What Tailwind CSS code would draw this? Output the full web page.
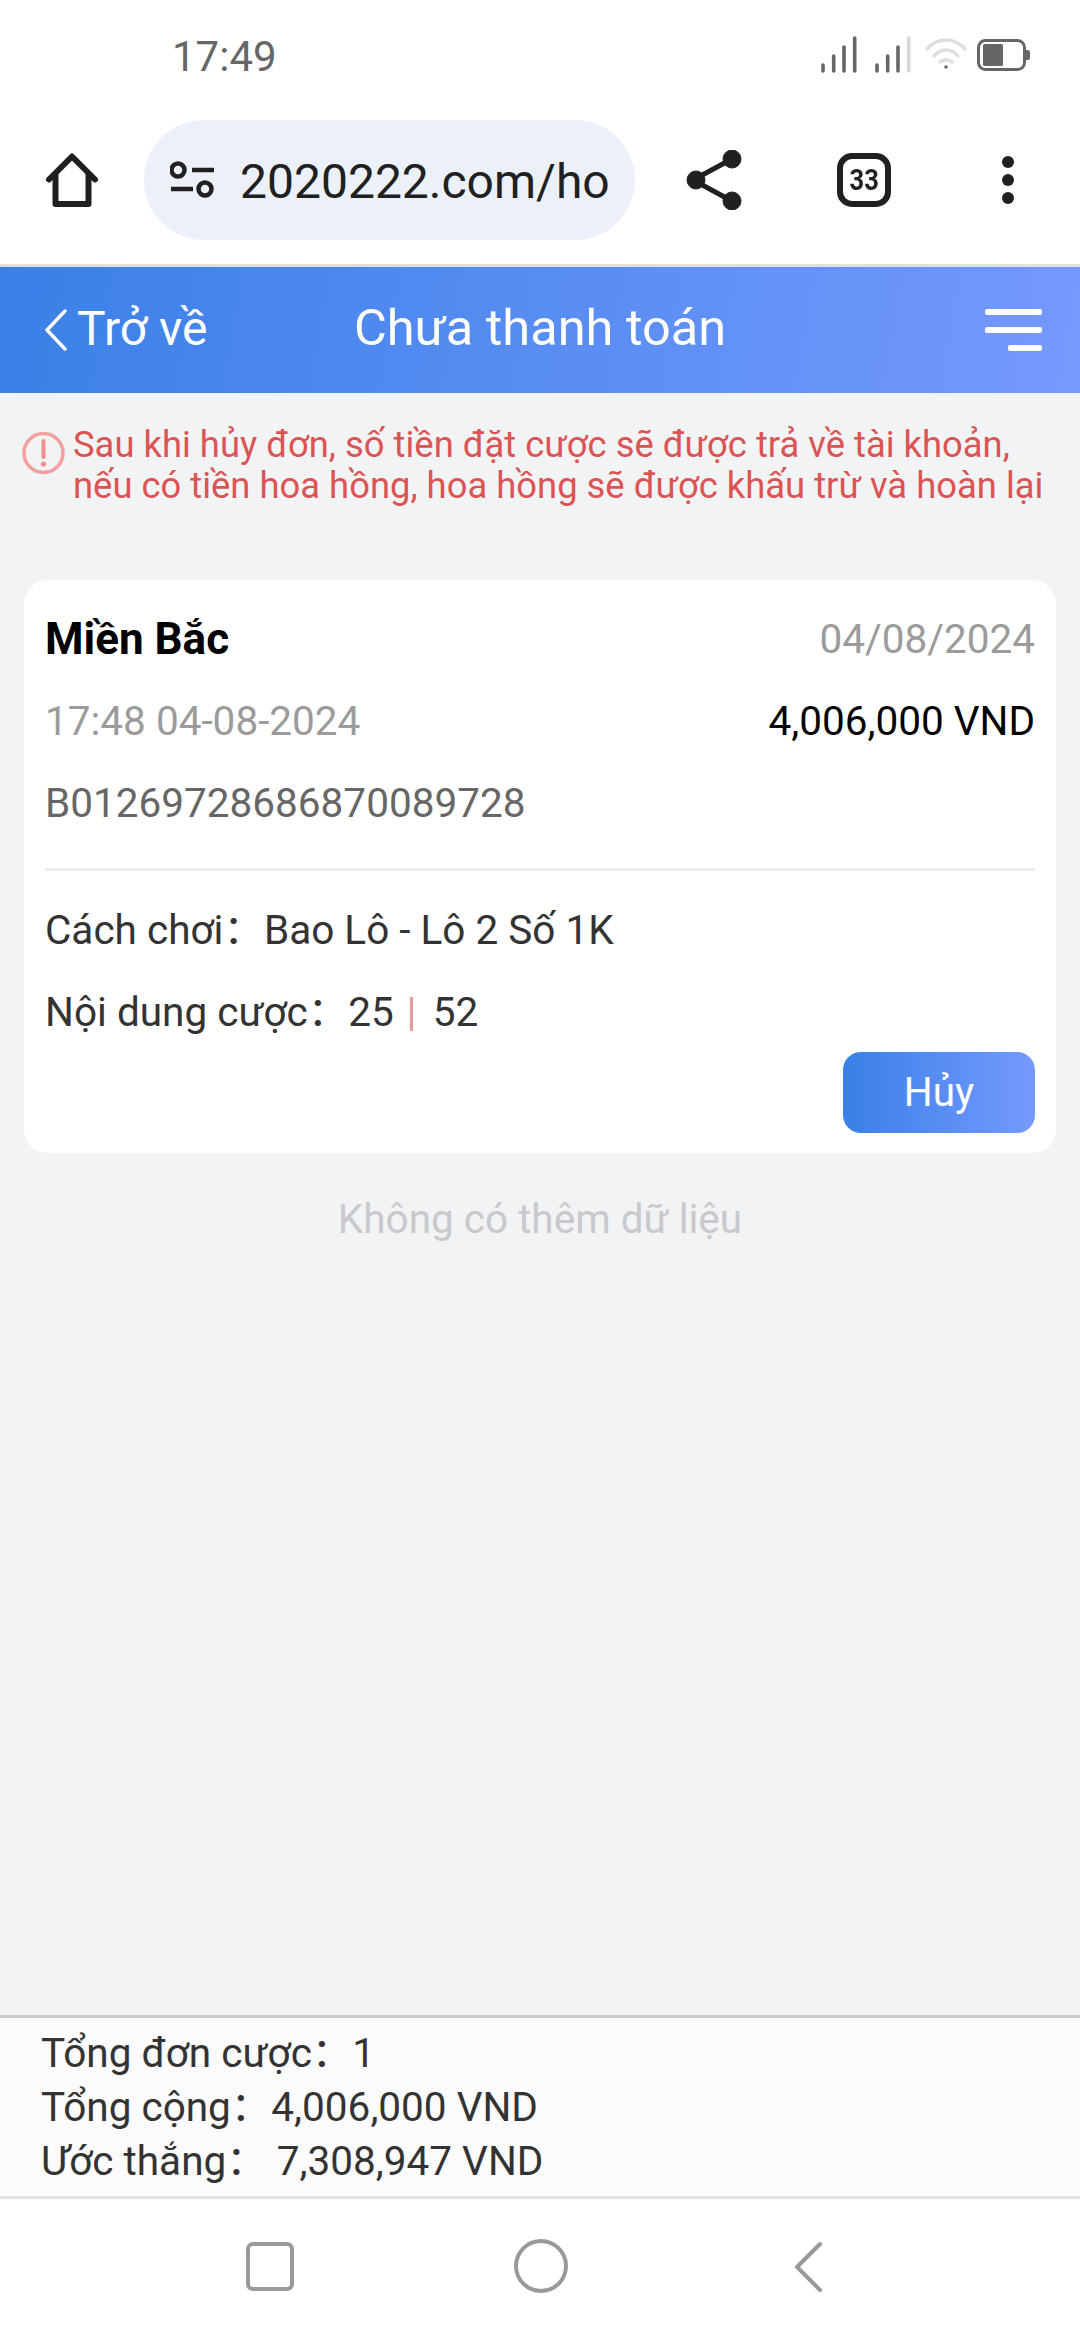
<!DOCTYPE html>
<html lang="vi">
<head>
<meta charset="utf-8">
<script src="https://cdn.jsdelivr.net/npm/@tailwindcss/browser@4"></script>
</head>
<body class="m-0">
<div class="w-[1080px] h-[2340px] flex flex-col bg-[#f2f3f5] overflow-hidden font-[Roboto,'Noto_Sans_CJK_SC',sans-serif]">
  <!-- status bar -->
  <div class="h-[100px] shrink-0 bg-white flex items-center pl-[172px] pr-[45px] pt-[14px]">
    <span class="text-[42px] leading-none text-[#666666]">17:49</span>
    <svg class="ml-auto -mt-[4px]" width="215" height="44" viewBox="820 33 215 44" fill="none">
      <g stroke="#666666" stroke-width="3.6" stroke-linecap="round">
        <path d="M823 71V65M833.7 71V56M844 71V47M854.7 71V38M877 71V65M887.7 71V56M898 71V47"/>
        <path d="M908.7 71V38" stroke="#d6d6d6"/>
      </g>
      <g stroke="#dedede" stroke-width="3.4" stroke-linecap="round">
        <path d="M927 49C938 37 954 37 965 49"/>
        <path d="M934 56C941 48 951 48 958 56" />
        <path d="M940 62C943 59 949 59 952 62" />
      </g>
      <circle cx="946" cy="67" r="1.8" fill="#666666"/>
      <rect x="978.5" y="40.5" width="46" height="29" rx="7" stroke="#666666" stroke-width="3"/>
      <rect x="983" y="44" width="20" height="22" rx="1.5" fill="#666666"/>
      <path d="M1026 50h1.5a2.5 2.5 0 0 1 2.5 2.5v5a2.5 2.5 0 0 1-2.5 2.5H1026z" fill="#666666"/>
    </svg>
  </div>
  <!-- browser toolbar -->
  <div class="h-[167px] shrink-0 bg-white border-b-[3px] border-[#e0e0e0] flex items-start pt-[20px]">
    <div class="w-[144px] h-[120px] flex items-center justify-center">
      <svg width="60" height="60" viewBox="0 0 60 60" fill="none" stroke="#202020" stroke-width="6" stroke-linecap="round" stroke-linejoin="round">
        <path d="M7 29.5 30 6.5 53 29.5"/>
        <path d="M13.5 24V54H46.5V24"/>
      </svg>
    </div>
    <div class="w-[491px] h-[120px] rounded-[60px] bg-[#ecf0f9] flex items-center pl-[26px] overflow-hidden">
      <svg class="shrink-0" width="48" height="40" viewBox="0 0 48 40" fill="none" stroke="#202020" stroke-width="4.5">
        <circle cx="8" cy="10" r="6.5"/>
        <path d="M22 10H44"/>
        <path d="M1 29H23"/>
        <circle cx="35" cy="29" r="6.5"/>
      </svg>
      <span class="ml-[22px] mt-[3px] text-[48px] leading-none text-[#202020] whitespace-nowrap">2020222.com/ho</span>
    </div>
    <div class="w-[158px] h-[120px] flex items-center justify-center">
      <svg width="60" height="60" viewBox="0 0 60 60" fill="#202020" stroke="#202020">
        <path d="M46 10 9 30 46 50" fill="none" stroke-width="5"/>
        <circle cx="48" cy="9" r="9"/>
        <circle cx="12" cy="30" r="9"/>
        <circle cx="48" cy="51" r="9"/>
      </svg>
    </div>
    <div class="w-[142px] h-[120px] flex items-center justify-center">
      <div class="w-[54px] h-[54px] rounded-[15px] border-[6px] border-[#202020] flex items-center justify-center text-[30px] font-bold leading-none text-[#202020]"><span class="scale-x-[0.85]">33</span></div>
    </div>
    <div class="w-[145px] h-[120px] flex flex-col items-center justify-center gap-[6px]">
      <div class="w-[12px] h-[12px] rounded-full bg-[#202020]"></div>
      <div class="w-[12px] h-[12px] rounded-full bg-[#202020]"></div>
      <div class="w-[12px] h-[12px] rounded-full bg-[#202020]"></div>
    </div>
  </div>
  <!-- page header -->
  <div class="relative h-[126px] shrink-0 bg-[linear-gradient(100deg,#3a80e6,#7599ff)] flex items-center pl-[44px] pr-[38px] text-white">
    <svg class="shrink-0" width="24" height="42" viewBox="0 0 24 42" fill="none" stroke="white" stroke-width="3.4" stroke-linecap="round" stroke-linejoin="round">
      <path d="M21 2 3 21 21 40"/>
    </svg>
    <span class="ml-[9px] text-[48px] leading-none -mt-[2px]">Trở về</span>
    <span class="absolute left-[340px] w-[400px] text-center text-[50.5px] leading-none whitespace-nowrap -mt-[3px]">Chưa thanh toán</span>
    <div class="ml-auto flex flex-col items-end gap-[12px]">
      <div class="w-[57px] h-[6px] rounded-[2px] bg-white"></div>
      <div class="w-[57px] h-[6px] rounded-[2px] bg-white"></div>
      <div class="w-[34px] h-[6px] rounded-[2px] bg-white"></div>
    </div>
  </div>
  <!-- content -->
  <div class="flex-1 flex flex-col">
    <div class="flex items-start pt-[31px] pl-[22px]">
      <svg class="shrink-0 mt-[7px] blur-[0.6px]" width="44" height="44" viewBox="0 0 44 44" fill="none">
        <circle cx="21.5" cy="22" r="19.5" stroke="#f2a0a0" stroke-width="3.5"/>
        <path d="M21.5 10V26" stroke="#ee9090" stroke-width="4" stroke-linecap="round"/>
        <circle cx="21.5" cy="33" r="2.6" fill="#ee9090"/>
      </svg>
      <p class="ml-[7px] text-[36.4px] leading-[41px] text-[#dc5353] whitespace-nowrap">Sau khi hủy đơn, số tiền đặt cược sẽ được trả về tài khoản,<br>nếu có tiền hoa hồng, hoa hồng sẽ được khấu trừ và hoàn lại</p>
    </div>
    <div class="mt-[74px] mx-[24px] bg-white rounded-[24px] pt-[18px] pb-[20px] px-[21px]">
      <div class="h-[82px] flex items-center justify-between">
        <span class="text-[44px] leading-none font-bold text-black">Miền Bắc</span>
        <span class="text-[40.5px] leading-none text-[#9b9b9b]">04/08/2024</span>
      </div>
      <div class="h-[82px] flex items-center justify-between">
        <span class="text-[40.5px] leading-none text-[#9b9b9b]">17:48 04-08-2024</span>
        <span class="text-[40.5px] leading-none text-black">4,006,000 VND</span>
      </div>
      <div class="h-[82px] flex items-center">
        <span class="text-[40.5px] leading-none text-[#666666]">B01269728686870089728</span>
      </div>
      <div class="mt-[24px] mb-[18px] h-[3px] bg-[#eeeeee]"></div>
      <div class="h-[82px] flex items-center text-[40.5px] leading-none text-[#333333]">
        <span>Cách chơi：</span><span>Bao Lô - Lô 2 Số 1K</span>
      </div>
      <div class="h-[82px] flex items-center text-[40.5px] leading-none text-[#333333]">
        <span>Nội dung cược：</span><span>25</span>
        <span class="ml-[16px] mr-[20px] w-[3px] h-[34px] mt-[4px] bg-[#e89a9a]"></span>
        <span>52</span>
      </div>
      <div class="-mt-[1px] flex justify-end">
        <div class="w-[192px] h-[81px] rounded-[18px] bg-[linear-gradient(90deg,#3a80e6,#7599ff)] flex items-center justify-center text-[40.5px] leading-none text-white">Hủy</div>
      </div>
    </div>
    <div class="mt-[36px] text-center text-[40.5px] leading-[60px] text-[#c8c9cc]">Không có thêm dữ liệu</div>
  </div>
  <!-- totals -->
  <div class="h-[184px] shrink-0 bg-[#fbfbfb] border-t-[3px] border-b-[3px] border-t-[#cccccc] border-b-[#e3e3e3] flex flex-col justify-center pl-[41px] text-[40.5px] leading-[54px] text-[#333333]">
    <div>Tổng đơn cược：1</div>
    <div>Tổng cộng：4,006,000 VND</div>
    <div>Ước thắng：&nbsp;7,308,947 VND</div>
  </div>
  <!-- navigation bar -->
  <div class="h-[141px] shrink-0 bg-white flex items-center justify-center pb-[1px]">
    <div class="relative w-full h-[60px]">
      <div class="absolute left-[246px] top-[3px] w-[48px] h-[49px] rounded-[7px] border-[4px] border-[#999999]"></div>
      <div class="absolute left-[514px] top-0 w-[54px] h-[54px] rounded-full border-[4px] border-[#999999]"></div>
      <svg class="absolute left-[793px] top-[2px]" width="32" height="52" viewBox="0 0 32 52" fill="none" stroke="#999999" stroke-width="4" stroke-linecap="round" stroke-linejoin="round">
        <path d="M27 3 4 26 27 49"/>
      </svg>
    </div>
  </div>
</div>
</body>
</html>
